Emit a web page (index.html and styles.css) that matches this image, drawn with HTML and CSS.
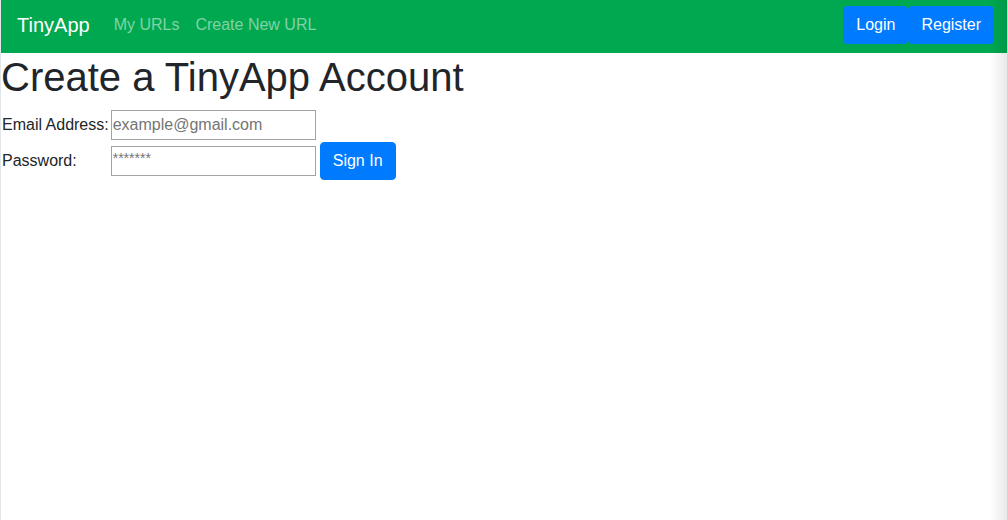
FILE: index.html
```html
<!DOCTYPE html>
<html lang="en">
<head>
<meta charset="utf-8">
<title>TinyApp</title>
<link rel="stylesheet" href="styles.css">
</head>
<body>
<nav class="navbar">
  <a class="brand" href="#">TinyApp</a>
  <div class="nav-links">
    <a class="nav-link" href="#">My URLs</a>
    <a class="nav-link" href="#">Create New URL</a>
  </div>
  <div class="nav-actions">
    <button class="btn">Login</button>
    <button class="btn">Register</button>
  </div>
</nav>
<main class="content">
  <h1 class="title">Create a TinyApp Account</h1>
  <form class="form">
    <label class="label" for="email">Email Address:</label>
    <div class="field"><input class="input" id="email" type="text" placeholder="example@gmail.com"></div>
    <label class="label" for="password">Password:</label>
    <div class="field"><input class="input" id="password" type="text" placeholder="*******"><button class="btn" type="button">Sign In</button></div>
  </form>
</main>
</body>
</html>
```

FILE: styles.css
```css
html, body {
  margin: 0;
  padding: 0;
  height: 100%;
}
body {
  font-family: "Liberation Sans", Arial, sans-serif;
  font-size: 16px;
  color: #212529;
  background: #fff;
  border-left: 1px solid #e3e6ea;
  box-sizing: border-box;
}
body::after {
  content: "";
  position: fixed;
  top: 0;
  right: 0;
  width: 17px;
  height: 100%;
  background: linear-gradient(to right, rgba(0,0,0,0), rgba(0,0,0,0.09));
  pointer-events: none;
}
.navbar {
  display: flex;
  align-items: center;
  height: 53px;
  box-sizing: border-box;
  padding: 6px 13px 9px 16px;
  background: #00a84f;
}
.brand {
  font-size: 20px;
  line-height: 30px;
  color: #fff;
  text-decoration: none;
  margin-right: 16px;
}
.nav-links {
  display: flex;
  flex: 1;
}
.nav-link {
  padding: 8px 8px;
  color: rgba(255,255,255,0.5);
  text-decoration: none;
  line-height: 24px;
}
.nav-actions {
  display: flex;
  gap: 0;
}
.btn {
  font-family: "Liberation Sans", Arial, sans-serif;
  font-size: 16px;
  line-height: 24px;
  height: 38px;
  padding: 6px 12px;
  border: 1px solid #007bff;
  border-radius: 4px;
  background: #007bff;
  color: #fff;
  box-sizing: border-box;
  cursor: pointer;
}
.title {
  font-size: 40px;
  font-weight: 500;
  line-height: 48px;
  margin: 0 0 9px;
}
.form {
  display: grid;
  grid-template-columns: auto auto;
  justify-content: start;
  align-items: center;
  row-gap: 2px;
  column-gap: 2px;
  margin: 0;
  padding-left: 1px;
}
.label {
  line-height: 24px;
}
.field {
  display: flex;
  align-items: center;
  gap: 4px;
}
.input {
  width: 205px;
  height: 30px;
  box-sizing: border-box;
  border: 1px solid #a3a3a3;
  padding: 1px 1px;
  font-family: "Liberation Sans", Arial, sans-serif;
  font-size: 16px;
  color: #212529;
  margin: 0;
}
.input::placeholder {
  color: #757575;
}
#password::placeholder {
  font-size: 14px;
}
#password {
  padding-bottom: 8px;
}
```
